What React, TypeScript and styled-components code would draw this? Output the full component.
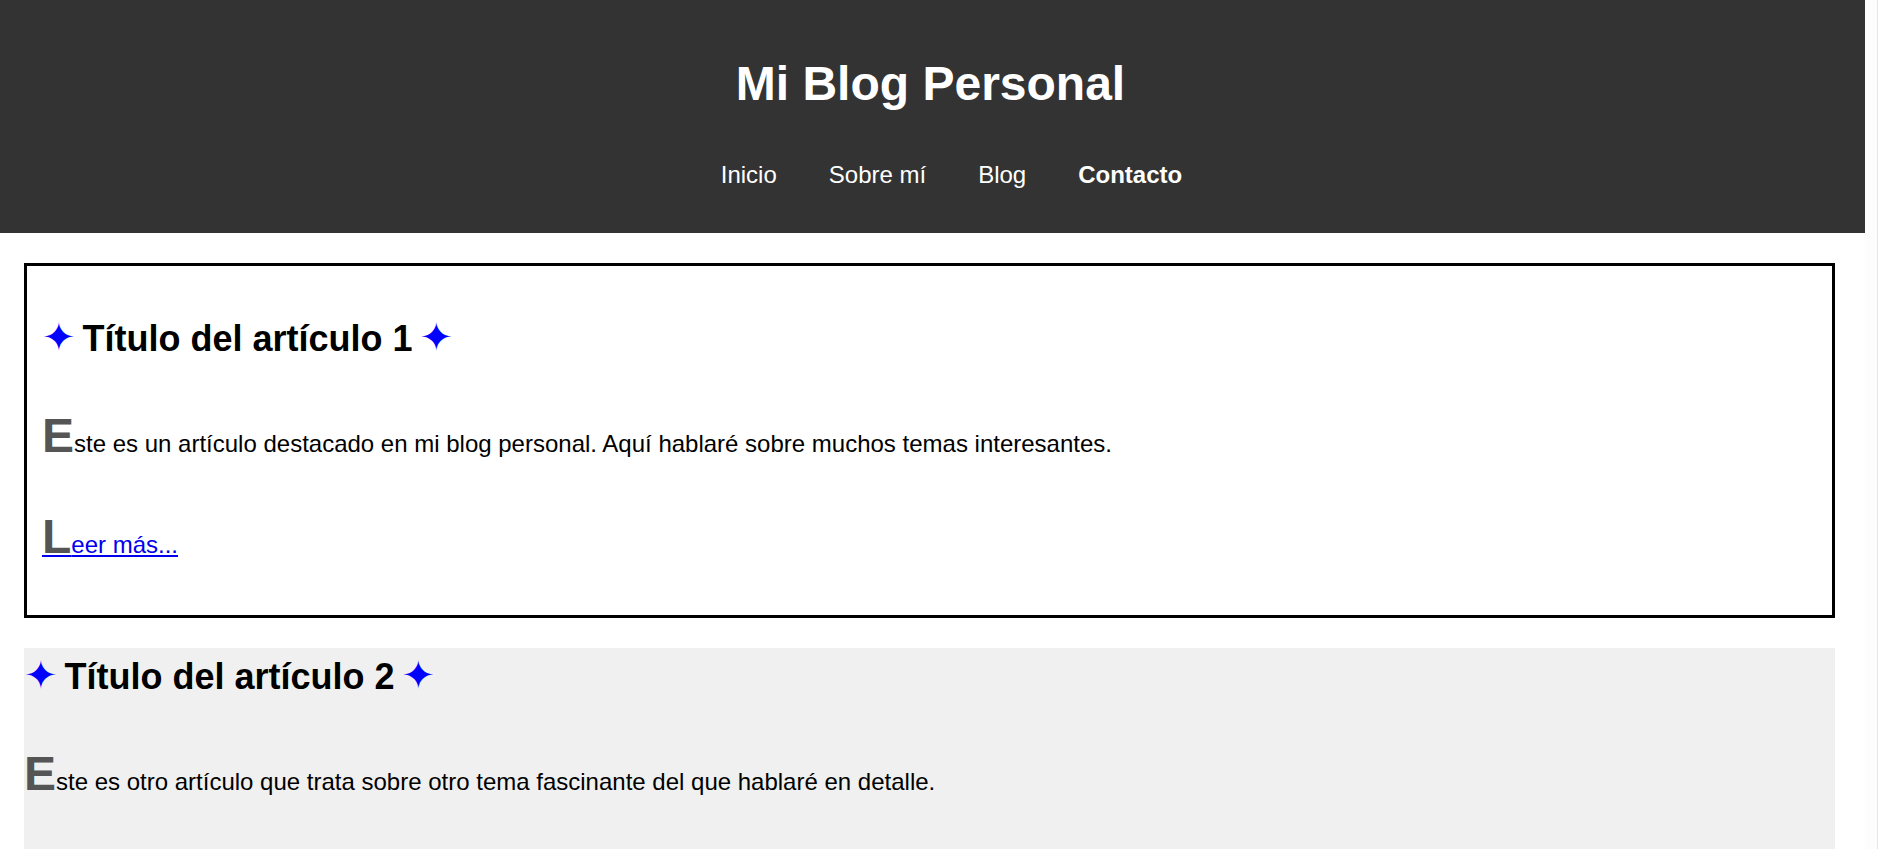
import React from 'react';
import styled, { createGlobalStyle, css } from 'styled-components';

const GlobalStyle = createGlobalStyle`
  body {
    margin: 0;
    padding-right: 13px;
    font-family: 'Liberation Sans', Arial, 'DejaVu Sans', sans-serif;
    font-size: 24px;
    line-height: 1.6;
    color: #000;
    background: #fff;
  }
`;

// light scroll track at the right edge, as in the screenshot
const ScrollTrack = styled.div`
  position: fixed;
  top: 0;
  right: 0;
  bottom: 0;
  width: 12px;
  background: #fdfdfd;
  border-right: 1px solid #e6e6e6;
`;

const Header = styled.header`
  padding: 14px 0 0;
  background: #333;
  color: #fff;
  text-align: center;
`;

const Title = styled.h1`
  margin: 32px 0 0;
  padding-right: 4px;
  font-size: 48px;
  font-weight: bold;
`;

const NavList = styled.ul`
  display: flex;
  justify-content: center;
  gap: 52px;
  margin: 0;
  padding: 33px 0 39px 38px;
  list-style: none;
`;

const NavLink = styled.a<{ $active?: boolean }>`
  color: #fff;
  text-decoration: none;
  font-weight: ${(p) => (p.$active ? 'bold' : 'normal')};
`;

const Main = styled.main`
  padding: 30px 30px 0 24px;
`;

const Article = styled.article<{ $featured?: boolean }>`
  margin-bottom: 30px;

  ${(p) =>
    p.$featured
      ? css`
          border: 3px solid #000;
          padding: 14px 15px 16px;
        `
      : css`
          background: #f0f0f0;
        `}
`;

const Heading = styled.h2`
  margin: 30px 0;
  font-size: 36px;
  font-weight: bold;

  &::before,
  &::after {
    content: '✦';
    color: #00f;
    font-family: 'DejaVu Sans', sans-serif;
    font-size: 40px;
    line-height: 1;
  }

  &::before {
    margin-right: 7px;
  }

  &::after {
    margin-left: 7px;
  }
`;

const Paragraph = styled.p`
  margin: 24px 0;

  &::first-letter {
    font-size: 48px;
    font-weight: bold;
    color: #555;
  }
`;

const MoreLink = styled.a`
  color: #0000ee;
  text-decoration: underline;
`;

const navItems = [
  { label: 'Inicio' },
  { label: 'Sobre mí' },
  { label: 'Blog' },
  { label: 'Contacto', active: true },
];

const articles = [
  {
    title: 'Título del artículo 1',
    text: 'Este es un artículo destacado en mi blog personal. Aquí hablaré sobre muchos temas interesantes.',
    featured: true,
  },
  {
    title: 'Título del artículo 2',
    text: 'Este es otro artículo que trata sobre otro tema fascinante del que hablaré en detalle.',
    featured: false,
  },
];

export default function App() {
  return (
    <>
      <GlobalStyle />
      <Header>
        <Title>Mi Blog Personal</Title>
        <nav>
          <NavList>
            {navItems.map((item) => (
              <li key={item.label}>
                <NavLink href="#" $active={item.active}>
                  {item.label}
                </NavLink>
              </li>
            ))}
          </NavList>
        </nav>
      </Header>
      <Main>
        {articles.map((a) => (
          <Article key={a.title} $featured={a.featured}>
            <Heading>{a.title}</Heading>
            <Paragraph>{a.text}</Paragraph>
            <Paragraph>
              <MoreLink href="#">Leer más...</MoreLink>
            </Paragraph>
          </Article>
        ))}
      </Main>
      <ScrollTrack />
    </>
  );
}
